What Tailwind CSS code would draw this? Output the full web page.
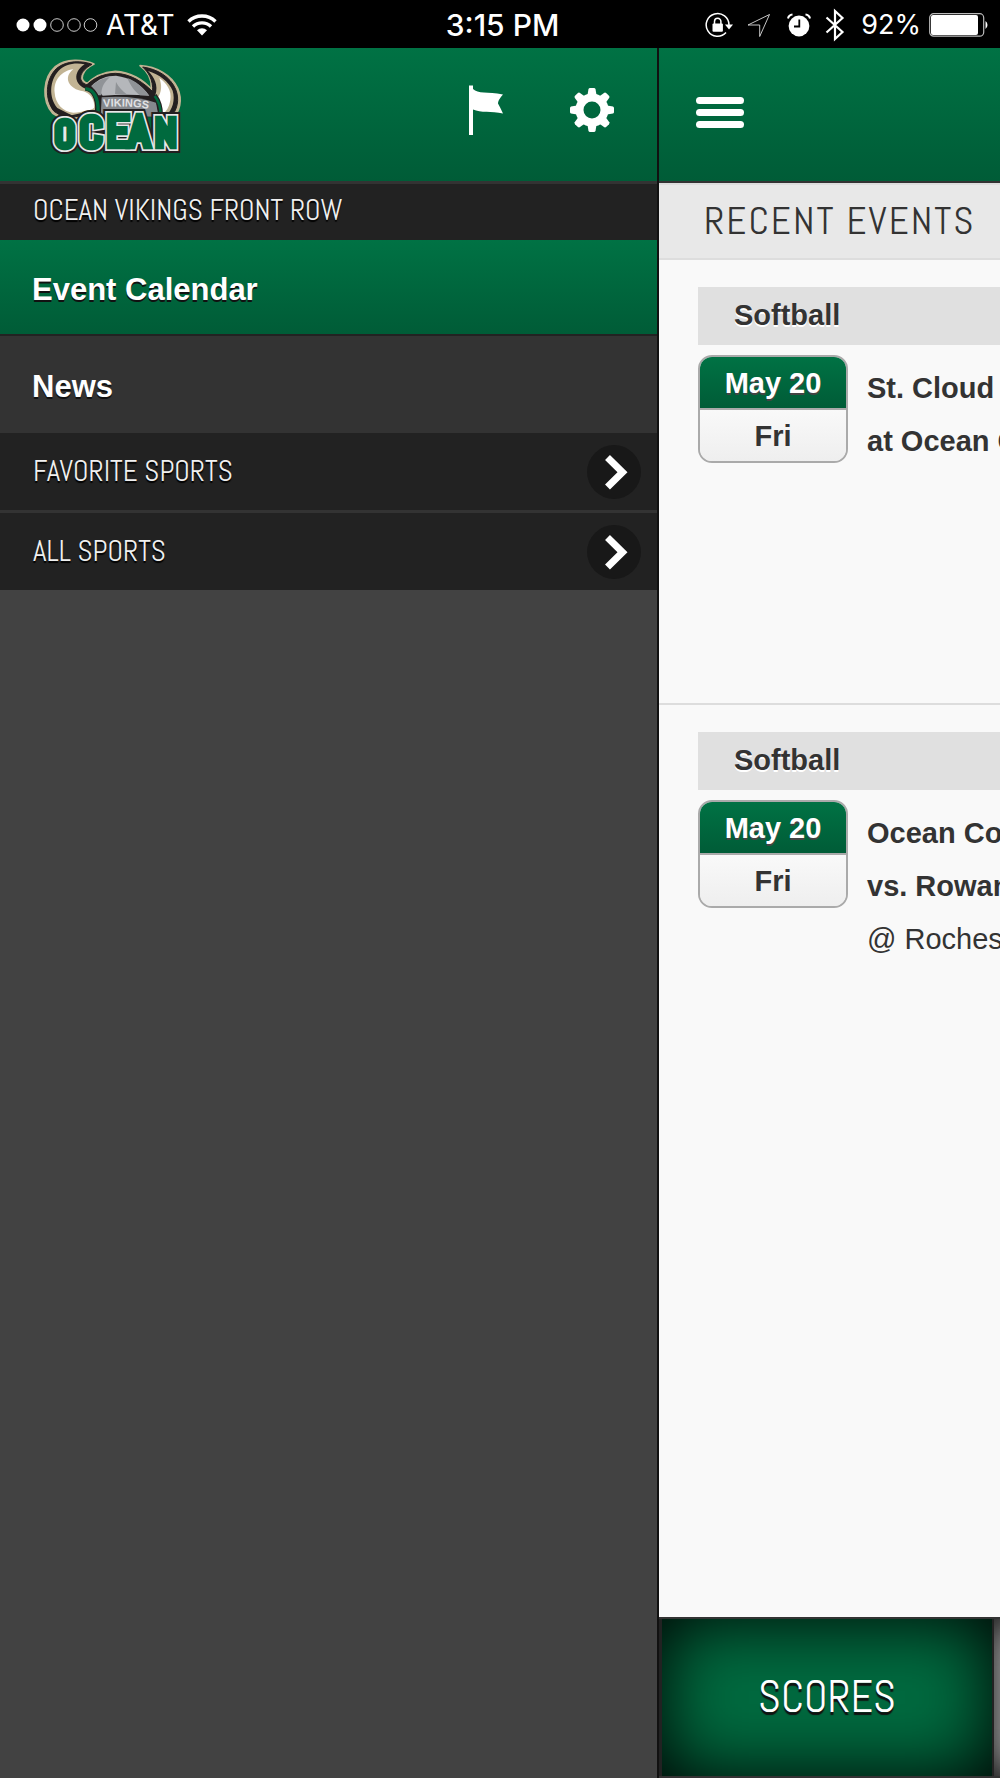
<!DOCTYPE html>
<html lang="en">
<head>
  <meta charset="UTF-8" />
  <meta name="viewport" content="width=device-width, initial-scale=1.0"/>
  <title>Ocean Vikings Front Row</title>
  <script src="https://cdn.jsdelivr.net/npm/@tailwindcss/browser@4"></script>
</head>
<body class="flex flex-col min-h-screen overflow-x-hidden bg-[#424242] font-['Liberation_Sans',Arial,sans-serif]">

  <!-- Status bar -->
  <div class="flex h-12 items-center justify-between bg-black pt-[2px] pl-4 pr-[11px] text-white font-[Inter,sans-serif] text-[27px]">
    <div class="flex flex-1 items-center gap-2">
      <svg class="w-[82px] h-[14px]" viewBox="0 0 82 14" fill="none" stroke="#fff">
        <circle cx="7" cy="7" r="6.5" fill="#fff" stroke="none"/>
        <circle cx="24" cy="7" r="6.5" fill="#fff" stroke="none"/>
        <circle cx="41" cy="7" r="6.3" stroke-width=".8"/>
        <circle cx="58" cy="7" r="6.3" stroke-width=".8"/>
        <circle cx="74.5" cy="7" r="6.3" stroke-width=".8"/>
      </svg>
      <span class="text-[28px]">AT&amp;T</span>
      <svg class="w-[30px] h-[22px] ml-1" viewBox="0 0 30 22" fill="none" stroke="#fff" stroke-width="3.4">
        <path d="M1.500 7.500a19.500 19.500 0 0 1 27 0"/>
        <path d="M6 12.500a13 13 0 0 1 18 0"/>
        <path d="M15 21.500l-5-5.200a7.200 7.200 0 0 1 10 0z" fill="#fff" stroke="none"/>
      </svg>
    </div>
    <span class="font-medium text-[30px]">3:15 PM</span>
    <div class="flex flex-1 items-center justify-end">
      <svg class="w-7 h-[26px] mr-[14px]" viewBox="0 0 28 26" fill="none" stroke="#fff" stroke-width="1.5">
        <path d="M21 20.600A11.400 11.400 0 1 1 24 13"/>
        <path d="M20 12.500h8l-4 5z" fill="#fff" stroke="none"/>
        <path d="M9.500 12V9.500a3.200 3.200 0 0 1 6.400 0V12"/>
        <rect x="7.500" y="11.500" width="10.400" height="8.200" rx="1" fill="#fff" stroke="none"/>
      </svg>
      <svg class="w-6 h-[25px] mr-4" viewBox="0 0 24 25" fill="none" stroke="#ddd" stroke-width=".9">
        <path d="M22.500 1.500L1 12h11.700v11.500z"/>
      </svg>
      <svg class="w-6 h-6 mr-[14px]" viewBox="0 0 24 24" fill="none">
        <circle cx="12" cy="13" r="10.400" fill="#fff"/>
        <path d="M1 5.500a5 5 0 0 1 4.500-4M18.500 1.500A5 5 0 0 1 23 5.500" stroke="#fff" stroke-width="2"/>
        <path d="M12.300 6.500V13.500H7" stroke="#000" stroke-width="1.800"/>
      </svg>
      <svg class="w-5 h-[34px] mr-4" viewBox="0 0 20 34" fill="none" stroke="#fff" stroke-width="2.2">
        <path d="M1.500 9.500L17.500 24 10 31V3l7.500 7L1.500 24.500"/>
      </svg>
      <span>92%</span>
      <svg class="w-[60px] h-6 ml-2" viewBox="0 0 60 24" fill="none">
        <rect x=".7" y=".7" width="54" height="22.500" rx="4" stroke="#bbb" stroke-width="1.2"/>
        <rect x="2" y="2" width="47" height="20" rx="2" fill="#fff"/>
        <path d="M56.500 8a5 5 0 0 1 0 8z" fill="#fff"/>
      </svg>
    </div>
  </div>

  <div class="flex flex-1">

    <!-- Side menu -->
    <aside class="w-[65.9%] shrink-0 border-r-2 border-[#111]">
      <header class="flex h-[133px] items-start bg-linear-to-b from-[#007244] to-[#005c37] pl-[30px] pr-[37px]">
        <svg class="w-[170px] h-[124px]" viewBox="0 -6 510 372" role="img" aria-label="Ocean Vikings">
          <!-- horns and helmet outline -->
          <g stroke-linejoin="round" stroke="#c2b494" stroke-width="5" fill="#c2b494">
            <path d="M192 42C160 28 108 24 76 50C38 84 34 150 68 190L105 212L200 190L240 120L172 100C145 92 155 60 192 42z"/>
            <path d="M330 47C380 50 425 75 443 115C458 150 450 185 425 208L370 200L364 115C366 84 350 62 330 47z"/>
            <path d="M166 106C190 80 220 66 256 64C300 66 340 88 366 120L380 190H190z"/>
          </g>
          <g stroke-linejoin="round" stroke="#231f20" stroke-width="3" fill="#231f20">
            <path d="M186 43C158 32 110 30 80 55C46 87 43 148 72 184L105 205L200 190L240 120L172 105C138 94 150 62 186 43z"/>
            <path d="M338 51C382 57 421 80 437 118C449 148 443 180 420 204L370 200L368 125C370 88 354 66 338 51z"/>
            <path d="M166 109C190 84 220 71 256 70C300 71 340 95 376 133L390 200H190z"/>
          </g>
          <path d="M164 43C135 36 105 43 86 62C58 92 56 142 82 174L125 196L195 180C202 155 190 130 170 117C134 106 126 68 164 43z" fill="#c2b494"/>
          <path d="M130 58C95 62 70 90 74 128C76 160 98 185 130 188C160 186 180 182 192 174C196 150 180 130 160 124C116 118 98 82 130 58z" fill="#fff"/>
          <path d="M354 63C388 74 416 94 428 122C436 150 428 178 408 197L392 188L376 136C386 105 372 80 354 63z" fill="#c2b494"/>
          <path d="M388 84C410 100 426 122 421 150C418 172 408 186 398 192L382 144C396 128 396 104 388 84z" fill="#fff"/>
          <path d="M184 108C205 86 230 77 258 77C300 82 335 104 358 137Q290 132 218 137Q205 118 184 108z" fill="#b5b7bb"/>
          <path d="M240 82C222 96 214 112 214 136H205L184 109C200 94 218 84 240 82zM258 96L255 132L292 134C278 124 266 112 258 96zM292 84C302 108 314 124 330 136H356C340 112 318 94 292 84z" fill="#909397"/>
          <path d="M215 142Q310 135 378 158L386 200L212 198z" fill="#85888d"/>
          <path d="M166 114C190 116 206 142 204 186" fill="none" stroke="#231f20" stroke-width="17"/>
          <path d="M166 116C190 118 206 142 204 186" fill="none" stroke="#006a3e" stroke-width="10"/>
          <path d="M374 136Q392 160 392 195" fill="none" stroke="#231f20" stroke-width="14"/>
          <path d="M374 138Q392 160 392 195" fill="none" stroke="#006a3e" stroke-width="8"/>
          <path id="band" d="M220 171Q310 164 392 184" fill="none"/>
          <text font-family="Liberation Sans" font-weight="700" font-size="33" fill="#e0e0e3"><textPath href="#band">VIKINGS</textPath></text>
          <!-- wordmark -->
          <defs>
            <g id="word" font-family="Abel, Open Sans Condensed, Roboto Condensed, sans-serif">
              <text x="75" y="290" font-size="110">O</text>
              <text x="149" y="290" font-size="130">C</text>
              <text x="230" y="289" font-size="128">E</text>
              <text x="297" y="289" font-size="130">A</text>
              <text x="376" y="289" font-size="114">N</text>
            </g>
          </defs>
          <g stroke-linejoin="miter">
            <use href="#word" fill="#231f20" stroke="#231f20" stroke-width="42"/>
            <use href="#word" fill="#e8e8e8" stroke="#e8e8e8" stroke-width="30"/>
            <use href="#word" fill="#006a3e" stroke="#006a3e" stroke-width="20"/>
          </g>
        </svg>
        <div class="ml-auto flex gap-[50px] pt-[30px]">
          <button class="flex w-14 h-16 items-center justify-center" aria-label="Favorites">
            <svg class="w-[34px] h-[50px]" viewBox="0 0 34 50" fill="#fff">
              <path d="M0 .5h4V4C9 9 18 6.500 34 9.500Q29 15 29 18.500Q31 22 34 28.500C22 26 12 28 4 24.500V50H0z"/>
            </svg>
          </button>
          <button class="flex w-14 h-16 items-center justify-center" aria-label="Settings">
            <svg class="w-11 h-11" viewBox="-22 -22 44 44" fill="#fff">
              <defs><path id="tooth" d="M-5-12L-3.500-21Q-3-22-2-22H2Q3-22 3.500-21L5-12z"/></defs>
              <circle r="12.500" fill="none" stroke="#fff" stroke-width="8"/>
              <use href="#tooth"/>
              <use href="#tooth" transform="rotate(45)"/>
              <use href="#tooth" transform="rotate(90)"/>
              <use href="#tooth" transform="rotate(135)"/>
              <use href="#tooth" transform="rotate(180)"/>
              <use href="#tooth" transform="rotate(225)"/>
              <use href="#tooth" transform="rotate(270)"/>
              <use href="#tooth" transform="rotate(315)"/>
            </svg>
          </button>
        </div>
      </header>

      <nav class="text-white">
        <h2 class="flex h-[59px] items-center border-t-3 border-[#333] bg-[#222] pb-[2px] pl-[33px] text-[29px] text-[#f0f0f0] font-[Abel,sans-serif] text-shadow-[0_2px_1px_#000]">OCEAN VIKINGS FRONT ROW</h2>
        <a href="#calendar" class="flex h-24 items-center border-b-2 border-[#222] bg-linear-to-b from-[#007244] to-[#005c37] pl-8 pt-[6px] text-[31px] font-bold text-shadow-[0_2px_0_#111]">Event Calendar</a>
        <a href="#news" class="flex h-[97px] items-center bg-[#333] pl-8 pt-[6px] text-[31px] font-bold text-shadow-[0_2px_0_#111]">News</a>
        <button class="flex w-full h-[77px] items-center justify-between bg-[#222] pl-[33px] pr-4 text-[29px] text-[#f0f0f0] font-[Abel,sans-serif] text-shadow-[0_2px_1px_#000]">
          FAVORITE SPORTS
          <svg class="w-[54px] h-[54px]" viewBox="0 0 54 54"><circle cx="27" cy="27" r="27" fill="#181818"/><path d="M20.500 12.500L35.500 27.200 20.500 42" fill="none" stroke="#fff" stroke-width="7"/></svg>
        </button>
        <button class="flex w-full h-20 items-center justify-between border-t-3 border-[#333] bg-[#222] pl-[33px] pr-4 text-[29px] text-[#f0f0f0] font-[Abel,sans-serif] text-shadow-[0_2px_1px_#000]">
          ALL SPORTS
          <svg class="w-[54px] h-[54px]" viewBox="0 0 54 54"><circle cx="27" cy="27" r="27" fill="#181818"/><path d="M20.500 12.500L35.500 27.200 20.500 42" fill="none" stroke="#fff" stroke-width="7"/></svg>
        </button>
      </nav>
    </aside>

    <!-- Page pushed aside by the menu -->
    <main class="flex min-w-0 flex-1 flex-col overflow-hidden whitespace-nowrap bg-[#f9f9f9] text-[#333]">
      <header class="flex h-[135px] items-center border-b-2 border-[#333] bg-linear-to-b from-[#007244] to-[#005c37] pb-1 pl-[37px]">
        <button class="flex w-12 flex-col gap-[5px]" aria-label="Menu">
          <span class="h-[7px] w-full rounded-full bg-white"></span>
          <span class="h-[7px] w-full rounded-full bg-white"></span>
          <span class="h-[7px] w-full rounded-full bg-white"></span>
        </button>
      </header>

      <h1 class="flex h-[77px] items-center border-y-2 border-[#ddd] bg-[#e8e8e8] pl-[45px] text-[39px] tracking-[2px] font-[Abel,sans-serif]">RECENT EVENTS</h1>

      <section class="min-h-[445px] border-b-2 border-[#ddd] pt-[27px] pl-[39px] text-[29px]">
        <h2 class="flex h-[58px] items-center bg-[#e0e0e0] pl-9 font-bold text-shadow-[0_2px_0_#fff]">Softball</h2>
        <div class="mt-[10px] flex gap-[19px]">
          <div class="flex w-[150px] h-[108px] shrink-0 flex-col overflow-hidden rounded-[14px] border-2 border-[#aaa] text-center font-bold leading-[53px]">
            <span class="h-[53px] border-b-2 border-[#aaa] bg-linear-to-b from-[#007244] to-[#005c37] text-white text-shadow-[0_2px_0_#444]">May 20</span>
            <span class="flex-1 bg-linear-to-b from-[#f9f9f9] to-[#eee]">Fri</span>
          </div>
          <div class="pt-[7px] font-bold leading-[53px]">
            <p>St. Cloud</p>
            <p>at Ocean County</p>
          </div>
        </div>
      </section>

      <section class="pt-[27px] pl-[39px] text-[29px]">
        <h2 class="flex h-[58px] items-center bg-[#e0e0e0] pl-9 font-bold text-shadow-[0_2px_0_#fff]">Softball</h2>
        <div class="mt-[10px] flex gap-[19px]">
          <div class="flex w-[150px] h-[108px] shrink-0 flex-col overflow-hidden rounded-[14px] border-2 border-[#aaa] text-center font-bold leading-[53px]">
            <span class="h-[53px] border-b-2 border-[#aaa] bg-linear-to-b from-[#007244] to-[#005c37] text-white text-shadow-[0_2px_0_#444]">May 20</span>
            <span class="flex-1 bg-linear-to-b from-[#f9f9f9] to-[#eee]">Fri</span>
          </div>
          <div class="pt-[7px] font-bold leading-[53px]">
            <p>Ocean County</p>
            <p>vs. Rowan</p>
            <p class="font-normal">@ Rochester</p>
          </div>
        </div>
      </section>

      <footer class="mt-auto flex gap-[2px] border-y-2 border-[#333] bg-[#222] pl-[3px]">
        <button class="h-[157px] w-[330px] shrink-0 bg-[#006a3f] pb-[2px] text-[44px] text-white inset-shadow-[0_0_72px_#000] font-[Abel,sans-serif] text-shadow-[0_3px_1px_#111]">SCORES</button>
        <button class="h-[157px] w-[330px] shrink-0 bg-[#bbb] inset-shadow-[0_0_40px_#000]" aria-label="Schedule"></button>
      </footer>
    </main>
  </div>

</body>
</html>
